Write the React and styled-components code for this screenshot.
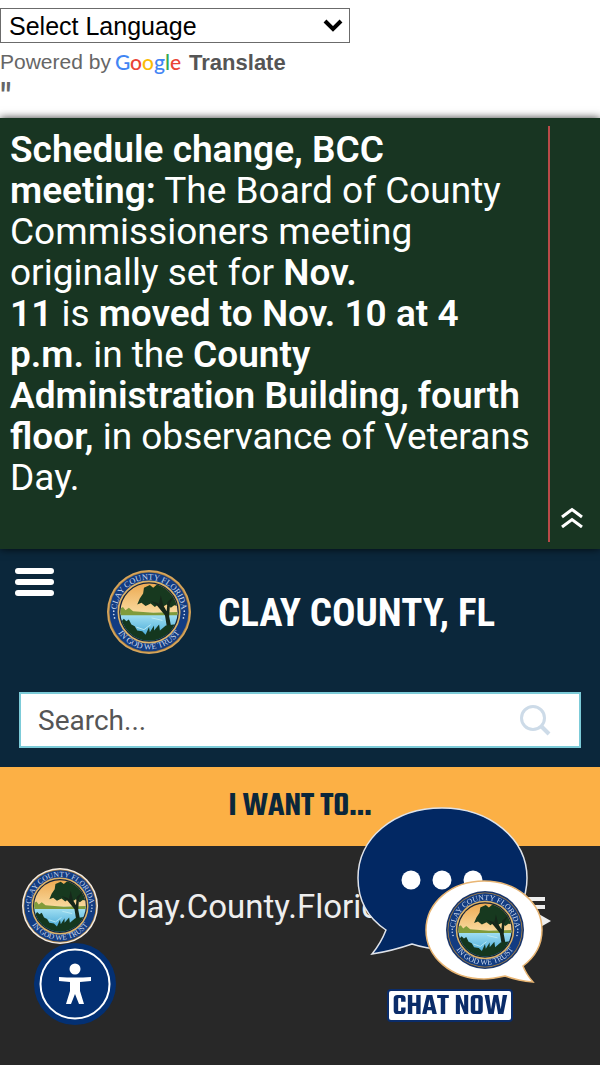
import { useId } from 'react'
import styled, { createGlobalStyle } from 'styled-components'

const GlobalStyle = createGlobalStyle`
    *{
        box-sizing: border-box;
    }
    body{
        margin: 0;
        background: #282828;
        font-family: Roboto, 'Liberation Sans', sans-serif;
    }
    button{
        padding: 0;
        border: 0;
        background: none;
        cursor: pointer;
    }
    svg{
        display: block;
        flex-shrink: 0;
    }
`

const TranslateStyled = styled.div`
    height: 118px;
    padding-block-start: 8px;
    background: #fff;
    color: #666;
    font-family: 'Liberation Sans', Arial, sans-serif;

    .language {
        position: relative;
        width: 350px;
    }
    .language select {
        display: block;
        width: 100%;
        height: 35px;
        padding: 0 8px;
        appearance: none;
        border: 1px solid #6b6b6b;
        border-radius: 0;
        background: #fff;
        color: #000;
        font: 25px 'Liberation Sans', Arial, sans-serif;
    }
    .language svg {
        position: absolute;
        right: 7px;
        top: 11px;
        pointer-events: none;
    }
    .powered {
        display: flex;
        align-items: center;
        gap: 4px;
        height: 38px;
        font-size: 21px;
    }
    .powered a {
        display: flex;
        align-items: baseline;
        gap: 8px;
        color: #555;
        font-size: 22px;
        font-weight: bold;
        text-decoration: none;
    }
    .quote {
        margin: 0;
        font: 500 36px/32px Roboto, sans-serif;
    }
`

const GoogleWord = styled.span`
    font: 500 21px Lato, sans-serif;
`

const Letter = styled.span`
    color: ${({ $color }) => $color};
`

const AlertStyled = styled.section`
    position: relative;
    display: flex;
    padding: 8px 0 7px 10px;
    background: #183522;
    color: #fff;
    box-shadow: 0 0 8px rgba(0, 0, 0, .8);

    p {
        flex: 1;
        margin: 0;
        padding: 3px 11px 44px 0;
        font-size: 37px;
        line-height: 41px;
    }
    b {
        font-weight: 600;
    }
    .collapse {
        display: flex;
        align-items: flex-end;
        justify-content: center;
        width: 52px;
        padding: 0 6px 14px 0;
        border-inline-start: 2px solid #b94a48;
    }
`

const HeaderStyled = styled.header`
    padding: 19px;
    background: #0b273b;

    .brand {
        display: flex;
        align-items: flex-start;
        height: 124px;
    }
    .menu {
        display: grid;
        gap: 5px;
        width: 39px;
        margin-inline-start: -4px;
    }
    .menu span {
        height: 6px;
        border-radius: 3px;
        background: #fff;
    }
    .home {
        display: flex;
        align-items: center;
        gap: 27px;
        margin: 2px 0 0 53px;
        color: #fff;
        text-decoration: none;
    }
    h1 {
        margin: 0;
        padding-block-start: 2px;
        font: bold 39px 'Roboto Condensed', 'Liberation Sans Narrow', Roboto, sans-serif;
    }
`

const SearchStyled = styled.form`
    display: flex;
    align-items: center;
    height: 56px;
    padding: 0 28px 0 17px;
    border: 2px solid #7ccbd8;
    background: #fff;

    input {
        flex: 1;
        min-width: 0;
        padding: 0;
        border: 0;
        outline: 0;
        background: none;
        font: 28px Roboto, sans-serif;
    }
    input::placeholder {
        color: #555;
    }
`

const WantButton = styled.button`
    display: block;
    width: 100%;
    height: 79px;
    && {
        background: #fcb045;
    }
    color: #0b273b;
    font: 600 34px Teko, 'Liberation Sans Narrow', Roboto, sans-serif;
`

const FeedStyled = styled.main`
    min-height: 219px;
    padding: 22px 49px 0 22px;
    background: #282828;

    .account {
        display: flex;
        align-items: center;
        color: #eee;
    }
    .account a {
        flex: 1;
        margin-inline-start: 19px;
        color: inherit;
        font-size: 33px;
        text-decoration: none;
    }
    .account button {
        padding-block-start: 14px;
    }
`

const AccessButton = styled.button`
    position: fixed;
    left: 34px;
    bottom: 40px;
`

const ChatButton = styled.button`
    position: fixed;
    right: 56px;
    bottom: 43px;
    display: flex;
    flex-direction: column;
    align-items: center;
    gap: 5px;

    .label {
        padding: 2px 4px 0;
        border: 2px solid #0a2c69;
        border-radius: 4px;
        background: #fff;
        color: #0a2c69;
        font: 600 31px/27px Teko, 'Liberation Sans Narrow', sans-serif;
    }
`

// drawn on a 100x100 box so it can be nested in other drawings
function Seal({ size, rim = '#d8a55a', ...rest }) {
    const id = useId()
    return (
        <svg width={size} height={size} viewBox='0 0 100 100' aria-hidden='true' {...rest}>
            <defs>
                <clipPath id={`${id}c`}><circle cx='50' cy='50' r='34' /></clipPath>
                <path id={`${id}t`} d='M11.500 50A38.500 38.500 0 0 1 88.500 50' />
                <path id={`${id}b`} d='M5.500 50A44.500 44.500 0 0 0 94.500 50' />
                <linearGradient id={`${id}s`} x1='0' y1='0' x2='0' y2='1'>
                    <stop offset='0' stopColor='#eda84f' />
                    <stop offset='1' stopColor='#f9dca2' />
                </linearGradient>
                <linearGradient id={`${id}w`} x1='0' y1='0' x2='0' y2='1'>
                    <stop offset='0' stopColor='#a9e4f5' />
                    <stop offset='1' stopColor='#2f9bd0' />
                </linearGradient>
            </defs>
            <circle cx='50' cy='50' r='50' fill={rim} />
            <circle cx='50' cy='50' r='48' fill='#a98243' />
            <circle cx='50' cy='50' r='47' fill='#123c82' />
            <circle cx='50' cy='50' r='36.500' fill='#15233a' stroke='#dcb368' strokeWidth='2' />
            <g clipPath={`url(#${id}c)`}>
                <rect x='15' y='15' width='70' height='38' fill={`url(#${id}s)`} />
                <rect x='15' y='51' width='70' height='35' fill={`url(#${id}w)`} />
                <path d='M14 47l5-3 3 4 4-3 5 4 12 1 12 1 31-1v4H14z' fill='#809b3b' />
                <path d='M39 34l4-6 1-7 7-3 4 3 6-5 9 3 5 6 8 8 3 10-6-1-4 3-5-4-5 3-4-4-5 4-5-4-6 3-5-4-5 2z' fill='#17391f' />
                <path d='M64 30l3 12 4 7 1-11 8-7-5 9-1 15 3 16 4 9H70l1-14-2-12-9-11-8-6 10 3z' fill='#16271a' />
                <path d='M15 64l5-6 3 3 3-2 3 6 4 2 3 5 6 1 4 4 4-9 1 6 5-8 0 6 6-7 1 7 7-6 16-2v24H15z' fill='#14371f' />
                <path d='M35 68l9 3 8-6M53 57l13 3' fill='none' stroke='#c5eef5' strokeWidth='1' />
            </g>
            <g fill='#cbd7ea' fontFamily='Liberation Serif, serif' fontSize='10' textAnchor='middle'>
                <text><textPath href={`#${id}t`} startOffset='50%'>CLAY COUNTY FLORIDA</textPath></text>
                <text><textPath href={`#${id}b`} startOffset='50%'>IN GOD WE TRUST</textPath></text>
            </g>
            <g fill='#cbd7ea'>
                <circle cx='8' cy='49' r='1' /><circle cx='8' cy='53' r='1' /><circle cx='9' cy='57' r='1' />
                <circle cx='92' cy='49' r='1' /><circle cx='92' cy='53' r='1' /><circle cx='91' cy='57' r='1' />
            </g>
        </svg>
    )
}

function Translate() {
    return (
        <TranslateStyled>
            <div className='language'>
                <select aria-label='Language Translate Widget'>
                    <option>Select Language</option>
                </select>
                <svg width='20' height='13' viewBox='0 0 20 13' fill='none' stroke='#000' strokeWidth='4'>
                    <path d='M2 2L10 10L18 2' />
                </svg>
            </div>
            <div className='powered'>
                Powered by
                <a href='#translate'>
                    <GoogleWord>
                        <Letter $color='#4285f4'>G</Letter>
                        <Letter $color='#ea4335'>o</Letter>
                        <Letter $color='#fbbc05'>o</Letter>
                        <Letter $color='#4285f4'>g</Letter>
                        <Letter $color='#34a853'>l</Letter>
                        <Letter $color='#ea4335'>e</Letter>
                    </GoogleWord>
                    Translate
                </a>
            </div>
            <p className='quote'>"</p>
        </TranslateStyled>
    )
}

function Alert() {
    return (
        <AlertStyled>
            <p>
                <b>Schedule change, BCC meeting:</b> The Board of County Commissioners
                meeting originally set for <b>Nov. <br />11</b> is <b>moved to Nov. 10 at
                4 p.m.</b> in the <b>County Administration Building, fourth floor,</b> in
                observance of Veterans Day.
            </p>
            <button className='collapse' aria-label='Collapse alert'>
                <svg width='22' height='21' viewBox='0 0 22 21' fill='none' stroke='#fff' strokeWidth='3'>
                    <path d='M1 10L11 2.500L21 10M1 20L11 12.500L21 20' />
                </svg>
            </button>
        </AlertStyled>
    )
}

function Header() {
    return (
        <HeaderStyled>
            <div className='brand'>
                <button className='menu' aria-label='Menu'>
                    <span /><span /><span />
                </button>
                <a className='home' href='#home'>
                    <Seal size={84} />
                    <h1>CLAY COUNTY, FL</h1>
                </a>
            </div>
            <SearchStyled onSubmit={(event) => event.preventDefault()}>
                <input type='text' placeholder='Search...' aria-label='Search' />
                <button aria-label='Submit search'>
                    <svg width='32' height='32' viewBox='0 0 32 32' fill='none' stroke='#cddbe8' strokeWidth='3'>
                        <circle cx='14' cy='14' r='11.500' />
                        <path d='M22 22L30 30' strokeWidth='4' />
                    </svg>
                </button>
            </SearchStyled>
        </HeaderStyled>
    )
}

function Feed() {
    return (
        <FeedStyled>
            <div className='account'>
                <Seal size={76} rim='#f4ece4' />
                <a href='#account'>Clay.County.Florida</a>
                <button aria-label='Playlist'>
                    <svg width='36' height='32' viewBox='0 0 36 32' fill='#eee'>
                        <path d='M0 0h30v4H0zM0 8h30v4H0zM0 16h18v4H0zM22 16l14 8-14 8z' />
                    </svg>
                </button>
            </div>
        </FeedStyled>
    )
}

function Chat() {
    return (
        <ChatButton>
            <svg width='188' height='178' viewBox='356 806 188 178' aria-hidden='true'>
                <path
                    d='M386 930C368 918 358 900 358 878C358 838 394 808 442 808C490 808 527 839 527 878C527 918 489 949 442 949Q427 949 412 944Q392 951 372 954Q381 943 386 930Z'
                    fill='#022863' stroke='#dfe3ea' strokeWidth='1.500'
                />
                <circle cx='411' cy='880' r='9.500' fill='#fff' />
                <circle cx='442' cy='880' r='9.500' fill='#fff' />
                <circle cx='473' cy='880' r='9.500' fill='#fff' />
                <path
                    d='M523 966Q526 974 533 982Q519 981 505 976C496 978 491 979 484 979C451 979 426 957 426 930C426 903 451 881 484 881C517 881 542 903 542 930C542 945 535 957 523 966Z'
                    fill='#fff' stroke='#e9b674' strokeWidth='1.500'
                />
                <Seal size={78} rim='#18356b' x='446' y='891' />
            </svg>
            <span className='label'>CHAT NOW</span>
        </ChatButton>
    )
}

function Access() {
    return (
        <AccessButton aria-label='Accessibility options'>
            <svg width='82' height='82' viewBox='0 0 82 82'>
                <circle cx='41' cy='41' r='41' fill='#033073' />
                <circle cx='41' cy='41' r='34.500' fill='none' stroke='#fff' strokeWidth='2' />
                <g fill='#fff'>
                    <circle cx='41' cy='26' r='5.500' />
                    <path d='M25 34Q41 35 57 34V38L46 39V48L50 61H45L41 51L37 61H32L36 48V39L25 38Z' />
                </g>
            </svg>
        </AccessButton>
    )
}

function App() {
    return (
        <>
            <GlobalStyle />
            <Translate />
            <Alert />
            <Header />
            <WantButton>I WANT TO...</WantButton>
            <Feed />
            <Access />
            <Chat />
        </>
    )
}

export default App
